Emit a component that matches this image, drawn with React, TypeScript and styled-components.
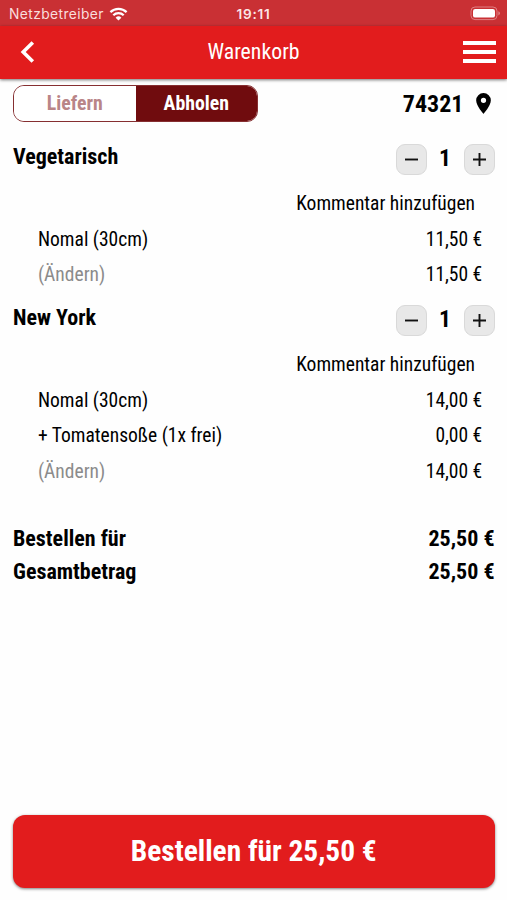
import React from 'react';
import styled, { createGlobalStyle } from 'styled-components';

const GlobalStyle = createGlobalStyle`
  *, *::before, *::after { box-sizing: border-box; }
  body { margin: 0; background: #fff; }
  button { border: 0; padding: 0; background: none; color: inherit; font: inherit; }
`;

const Screen = styled.div`
  width: 507px;
  height: 900px;
  display: flex;
  flex-direction: column;
  overflow: hidden;
  background: #fefefe;
  color: #000;
  font-family: 'Roboto Condensed', Roboto, sans-serif;
  font-stretch: 75%;
`;

const StatusBar = styled.div`
  height: 26px;
  flex: none;
  display: grid;
  grid-template-columns: 1fr auto 1fr;
  align-items: center;
  padding: 1px 6px 0 9px;
  background: #c93034;
  color: #f9dddd;
  font-family: Inter, sans-serif;
  font-stretch: 100%;
  font-size: 13.8px;
  letter-spacing: 0.4px;
`;

const Carrier = styled.div`
  display: flex;
  align-items: center;
  gap: 5px;
`;

const Clock = styled.div`
  font-weight: 600;
  font-size: 13.6px;
  letter-spacing: 0.7px;
  margin-right: 3px;
  color: #fbe6e6;
`;

const BatteryIcon = styled.svg`
  justify-self: end;
`;

const Header = styled.header`
  height: 53px;
  flex: none;
  display: grid;
  grid-template-columns: 1fr auto 1fr;
  align-items: center;
  padding: 0 11px 2px 20px;
  background: #e21c1d;
  color: #fff;
  box-shadow: 0 1px 3px rgba(0, 0, 0, 0.55);
`;

const Title = styled.h1`
  margin: 0 9px 0 0;
  font-weight: 400;
  font-size: 21.8px;
  line-height: 1;
`;

const MenuButton = styled.button`
  justify-self: end;
  display: flex;
`;

const BackButton = styled.button`
  display: flex;
`;

const Text = styled.span<{ $size?: number; $bold?: boolean; $muted?: boolean }>`
  font-size: ${p => p.$size ?? 19.5}px;
  font-weight: ${p => (p.$bold ? 700 : 400)};
  line-height: 1;
  white-space: nowrap;
  color: ${p => (p.$muted ? '#8b8b8b' : 'inherit')};
`;

const Content = styled.main`
  flex: 1;
  display: flex;
  flex-direction: column;
  padding: 6px 12.5px 12px 13px;
`;

const DeliveryRow = styled.div`
  display: flex;
  justify-content: space-between;
  height: 37px;
  margin-bottom: 22px;
`;

const Toggle = styled.div`
  display: flex;
  width: 245px;
  border: 1px solid #862f31;
  border-radius: 11px;
  overflow: hidden;
`;

const ToggleOption = styled.button<{ $active?: boolean }>`
  flex: 1;
  background: ${p => (p.$active ? '#700c0e' : '#fff')};
  color: ${p => (p.$active ? '#fff' : '#b98587')};
`;

const Postcode = styled.div`
  display: flex;
  align-items: center;
  gap: 12px;
  padding-right: 4px;
`;

const Item = styled.section`
  margin-bottom: 12.5px;
`;

const ItemHead = styled.div`
  display: flex;
  justify-content: space-between;
  height: 30px;
  margin-bottom: 12px;
`;

const ItemName = styled.h2`
  margin: 0;
  font-weight: 700;
  font-size: 22px;
  line-height: 25px;
`;

const Stepper = styled.div`
  display: grid;
  grid-template-columns: 31px 37px 31px;
  align-items: center;
  justify-items: center;
`;

const Count = styled.div`
  padding-bottom: 2px;
  font-weight: 700;
  font-size: 23.5px;
  line-height: 1;
`;

const StepButton = styled.button`
  width: 31px;
  height: 31px;
  display: grid;
  place-items: center;
  border: 1px solid #d9d9d9;
  border-radius: 9px;
  background: #e8e8e8;
`;

const Line = styled.div<{ $comment?: boolean }>`
  height: 35.5px;
  display: flex;
  align-items: center;
  justify-content: ${p => (p.$comment ? 'flex-end' : 'space-between')};
  padding: 0 ${p => (p.$comment ? 19.5 : 12.3)}px 0 25px;
`;

const Totals = styled.div`
  margin-top: 20.5px;
`;

const TotalRow = styled.div`
  height: 33px;
  display: flex;
  align-items: center;
  justify-content: space-between;
`;

const OrderButton = styled.button`
  height: 73px;
  margin-top: auto;
  border-radius: 12px;
  background: #e21c1d;
  color: #fff;
  box-shadow: 0 1px 3px rgba(0, 0, 0, 0.5);
`;

type Row = { label: string; price: string; muted?: boolean };

const items: { name: string; rows: Row[] }[] = [
  {
    name: 'Vegetarisch',
    rows: [
      { label: 'Nomal (30cm)', price: '11,50 €' },
      { label: '(Ändern)', price: '11,50 €', muted: true },
    ],
  },
  {
    name: 'New York',
    rows: [
      { label: 'Nomal (30cm)', price: '14,00 €' },
      { label: '+ Tomatensoße (1x frei)', price: '0,00 €' },
      { label: '(Ändern)', price: '14,00 €', muted: true },
    ],
  },
];

const totals = [
  { label: 'Bestellen für', price: '25,50 €' },
  { label: 'Gesamtbetrag', price: '25,50 €' },
];

function StepIcon({ plus }: { plus?: boolean }) {
  return (
    <svg width="15" height="15" viewBox="0 0 15 15" stroke="#111" strokeWidth="1.9">
      <path d={plus ? 'M1 7.5h13M7.5 1v13' : 'M1 7.5h13'} />
    </svg>
  );
}

export default function App() {
  return (
    <Screen>
      <GlobalStyle />
      <StatusBar>
        <Carrier>
          Netzbetreiber
          <svg width="19" height="14" viewBox="0 0 18 14" fill="none" stroke="#fff" strokeWidth="2.2">
            <path d="M.9 5.1a11.6 11.6 0 0 1 16.2 0M3.8 8.2a7.4 7.4 0 0 1 10.4 0" />
            <path d="M9 13.6 6.1 10.7a4.1 4.1 0 0 1 5.8 0Z" fill="#fff" stroke="none" />
          </svg>
        </Carrier>
        <Clock>19:11</Clock>
        <BatteryIcon width="31" height="15" viewBox="0 0 31 15">
          <rect x="1" y="1" width="26" height="12.6" rx="4" fill="none" stroke="#df7f82" />
          <rect x="3" y="3" width="22" height="8.6" rx="2.2" fill="#fff" />
          <path d="M28.3 5.2q1.7.5 1.7 2.1t-1.7 2.1Z" fill="#df7f82" />
        </BatteryIcon>
      </StatusBar>
      <Header>
        <BackButton aria-label="Zurück">
          <svg width="15" height="22" viewBox="0 0 15 22" fill="none" stroke="#fff" strokeWidth="3.6">
            <path d="M12.8 1.4 3.2 11l9.6 9.6" />
          </svg>
        </BackButton>
        <Title>Warenkorb</Title>
        <MenuButton aria-label="Menü">
          <svg width="33" height="24" viewBox="0 0 33 24" stroke="#fff" strokeWidth="4">
            <path d="M0 3h33M0 12h33M0 21h33" />
          </svg>
        </MenuButton>
      </Header>
      <Content>
        <DeliveryRow>
          <Toggle>
            <ToggleOption><Text $bold $size={19.8}>Liefern</Text></ToggleOption>
            <ToggleOption $active><Text $bold $size={19.8}>Abholen</Text></ToggleOption>
          </Toggle>
          <Postcode>
            <Text $bold $size={24}>74321</Text>
            <svg width="15" height="21" viewBox="0 0 14 20">
              <path fillRule="evenodd" d="M7 0a7 7 0 0 0-7 7c0 5.25 7 13 7 13s7-7.75 7-13a7 7 0 0 0-7-7Zm0 9.5a2.5 2.5 0 1 1 0-5 2.5 2.5 0 0 1 0 5Z" />
            </svg>
          </Postcode>
        </DeliveryRow>
        {items.map(item => (
          <Item key={item.name}>
            <ItemHead>
              <ItemName>{item.name}</ItemName>
              <Stepper>
                <StepButton aria-label="Weniger"><StepIcon /></StepButton>
                <Count>1</Count>
                <StepButton aria-label="Mehr"><StepIcon plus /></StepButton>
              </Stepper>
            </ItemHead>
            <Line $comment><Text>Kommentar hinzufügen</Text></Line>
            {item.rows.map(row => (
              <Line key={row.label}>
                <Text $muted={row.muted}>{row.label}</Text>
                <Text>{row.price}</Text>
              </Line>
            ))}
          </Item>
        ))}
        <Totals>
          {totals.map(t => (
            <TotalRow key={t.label}>
              <Text $bold $size={22}>{t.label}</Text>
              <Text $bold $size={22}>{t.price}</Text>
            </TotalRow>
          ))}
        </Totals>
        <OrderButton><Text $bold $size={29.4}>Bestellen für 25,50 €</Text></OrderButton>
      </Content>
    </Screen>
  );
}
